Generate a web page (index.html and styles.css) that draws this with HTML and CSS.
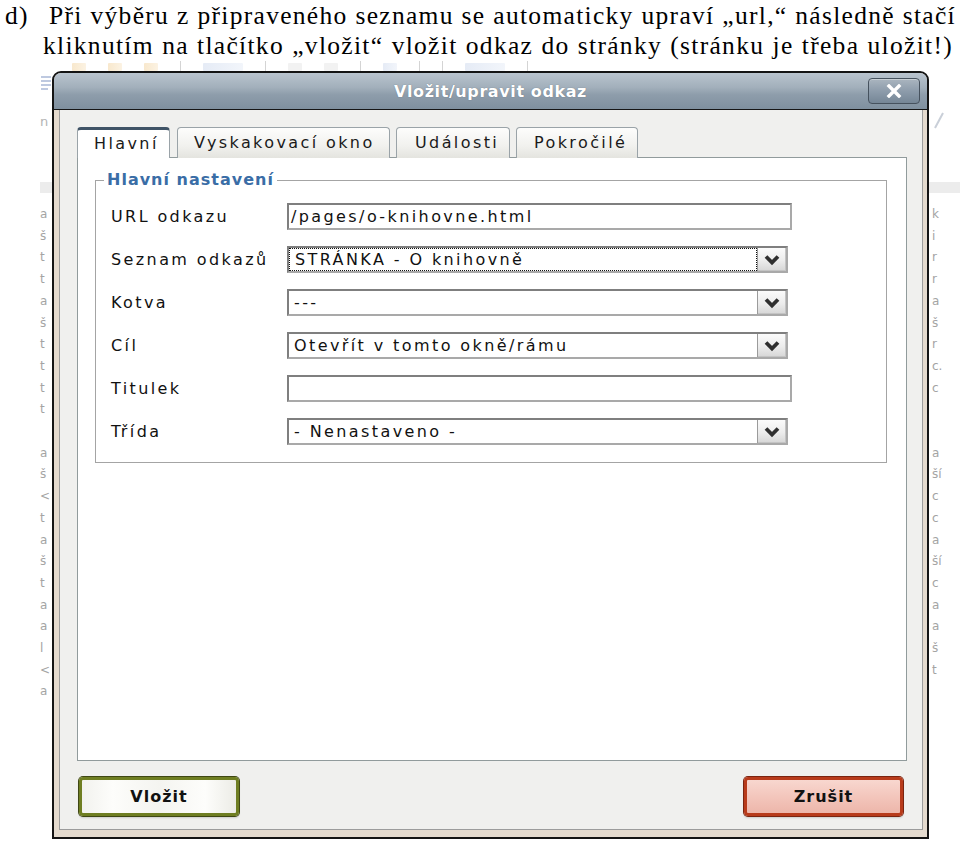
FILE: index.html
```html
<!DOCTYPE html>
<html lang="cs">
<head>
<meta charset="utf-8">
<title>Vložit/upravit odkaz</title>
<link rel="stylesheet" href="styles.css">
</head>
<body>
<div class="doc">
  <p class="intro">
    <span class="line l1"><span class="mark">d)</span>Při výběru z připraveného seznamu se automaticky upraví „url,“ následně stačí</span>
    <span class="line l2">kliknutím na tlačítko „vložit“ vložit odkaz do stránky (stránku je třeba uložit!)</span>
  </p>

  <div class="editor">
    <div class="toolbar">
      <span class="tb-ico tb-orange"></span>
      <span class="tb-ico tb-orange"></span>
      <span class="tb-ico tb-orange"></span>
      <span class="tb-sep"></span>
      <span class="tb-ico tb-blue wide"></span>
      <span class="tb-sep"></span>
      <span class="tb-ico tb-grey"></span>
      <span class="tb-ico tb-grey"></span>
      <span class="tb-sep"></span>
      <span class="tb-ico tb-blue"></span>
      <span class="tb-sep"></span>
      <span class="tb-sep"></span>
      <span class="tb-ico tb-blue wide"></span>
      <span class="tb-sep"></span>
    </div>
    <div class="page">
      <div class="col col-left">
        <svg class="list-ico" width="12" height="15" viewBox="0 0 12 15"><path d="M1 2h10M1 6h10M1 10h10M1 14h7" stroke="#a9b8d6" stroke-width="1.5"/></svg>
        <div class="ghost-n">n</div>
        <div class="band"></div>
        <div class="letters">
          <div>a</div><div>š</div><div>t</div><div>t</div><div>a</div><div>š</div><div>t</div><div>t</div><div>t</div><div>t</div><div>&nbsp;</div>
          <div>a</div><div>š</div><div>&lt;</div><div>t</div><div>a</div><div>š</div><div>t</div><div>a</div><div>a</div><div>l</div><div>&lt;</div><div>a</div>
        </div>
      </div>
      <div class="col col-right">
        <svg class="pen-ico" width="12" height="20" viewBox="0 0 12 20"><path d="M2 18L10 3" stroke="#c9cfd8" stroke-width="2"/></svg>
        <div class="band"></div>
        <div class="letters">
          <div>k</div><div>i</div><div>r</div><div>r</div><div>a</div><div>š</div><div>r</div><div>c.</div><div>c</div><div>&nbsp;</div><div>&nbsp;</div>
          <div>a</div><div>ší</div><div>c</div><div>c</div><div>a</div><div>ší</div><div>c</div><div>a</div><div>a</div><div>š</div><div>t</div>
        </div>
      </div>
    </div>
  </div>

  <div class="dialog">
    <div class="titlebar">
      <span></span>
      <span class="title">Vložit/upravit odkaz</span>
      <span class="close">
        <svg width="16" height="14" viewBox="0 0 16 14"><path d="M3 2L13 12M13 2L3 12" stroke="#fff" stroke-width="3.4" stroke-linecap="square"/></svg>
      </span>
    </div>
    <div class="frame">
      <div class="tabs">
        <div class="tab active t1">Hlavní</div>
        <div class="tab t2">Vyskakovací okno</div>
        <div class="tab t3">Události</div>
        <div class="tab t4">Pokročilé</div>
      </div>
      <div class="panel">
        <fieldset class="group">
          <legend>Hlavní nastavení</legend>
          <div class="row">
            <span class="label">URL odkazu</span>
            <div class="input">/pages/o-knihovne.html</div>
          </div>
          <div class="row">
            <span class="label">Seznam odkazů</span>
            <div class="select focused"><span class="val"><span class="focus">STRÁNKA - O knihovně</span></span><span class="arrow"><svg width="18" height="12" viewBox="0 0 18 12"><path d="M3 2.5L9 8.5L15 2.5" stroke="#2f2f2f" stroke-width="3.8" fill="none"/></svg></span></div>
          </div>
          <div class="row">
            <span class="label">Kotva</span>
            <div class="select"><span class="val">---</span><span class="arrow"><svg width="18" height="12" viewBox="0 0 18 12"><path d="M3 2.5L9 8.5L15 2.5" stroke="#2f2f2f" stroke-width="3.8" fill="none"/></svg></span></div>
          </div>
          <div class="row">
            <span class="label">Cíl</span>
            <div class="select"><span class="val">Otevřít v tomto okně/rámu</span><span class="arrow"><svg width="18" height="12" viewBox="0 0 18 12"><path d="M3 2.5L9 8.5L15 2.5" stroke="#2f2f2f" stroke-width="3.8" fill="none"/></svg></span></div>
          </div>
          <div class="row">
            <span class="label">Titulek</span>
            <div class="input"></div>
          </div>
          <div class="row">
            <span class="label">Třída</span>
            <div class="select"><span class="val">- Nenastaveno -</span><span class="arrow"><svg width="18" height="12" viewBox="0 0 18 12"><path d="M3 2.5L9 8.5L15 2.5" stroke="#2f2f2f" stroke-width="3.8" fill="none"/></svg></span></div>
          </div>
        </fieldset>
      </div>
      <div class="actions">
        <div class="btn btn-ok">Vložit</div>
        <div class="btn btn-cancel">Zrušit</div>
      </div>
    </div>
  </div>
</div>
</body>
</html>
```

FILE: styles.css
```css
* { box-sizing: border-box; }
html, body { margin: 0; padding: 0; background: #fff; }
body { width: 960px; height: 846px; overflow: hidden; font-family: "Liberation Serif", "Times New Roman", serif; }

.doc { position: relative; width: 960px; height: 846px; }

/* intro text */
.intro { margin: 0; padding-top: 1px; font-size: 25.5px; line-height: 30px; letter-spacing: 1.3px; color: #000; }
.line { display: block; text-align: justify; text-align-last: justify; white-space: nowrap; }
.l1 { margin-left: 5px; width: 951px; }
.l2 { margin-left: 43px; width: 910px; }
.mark { display: inline-block; width: 44px; text-align: left; text-align-last: left; }

/* faded editor behind the dialog */
.editor { font-family: "DejaVu Sans", sans-serif; }
.toolbar { height: 11px; display: flex; align-items: flex-start; gap: 22px; padding-left: 72px; overflow: hidden; }
.tb-ico { width: 14px; height: 8px; margin-top: 2px; opacity: .45; border-radius: 1px; }
.tb-ico.wide { width: 40px; }
.tb-orange { background: linear-gradient(90deg, #f0cc90, #f7e3c0); }
.tb-blue { background: linear-gradient(90deg, #c6d3ea, #e2e9f5); }
.tb-grey { background: #e2e2e2; }
.tb-sep { width: 1px; height: 11px; background: #d4d4d4; }

.page { display: flex; justify-content: space-between; padding-left: 40px; }
.col { display: flex; flex-direction: column; color: #a4a4a4; font-size: 12px; }
.col-left { width: 12px; }
.col-right { width: 31px; }
.list-ico { display: block; margin-top: 3px; }
.ghost-n { margin-top: 26px; height: 12px; line-height: 12px; color: #b4b4b4; font-size: 13px; }
.pen-ico { display: block; margin-top: 38px; margin-left: 4px; }
.band { height: 11px; background: #ececec; }
.col-left .band { margin-top: 54px; }
.col-right .band { margin-top: 52px; }
.letters { margin-top: 11px; line-height: 21.7px; }
.col-right .letters { padding-left: 3px; }

/* dialog */
.dialog {
  position: absolute; left: 52px; top: 71px; width: 877px; height: 768px;
  border: 2px solid #141414; border-radius: 9px 9px 0 0;
  background: #e4dace;
  display: flex; flex-direction: column;
  font-family: "DejaVu Sans", Verdana, sans-serif; color: #111;
  overflow: hidden;
}
.titlebar {
  flex: none; height: 37px; border-bottom: 1px solid #161616;
  background: linear-gradient(#b9c4ce, #a2afbb 40%, #8e9dab 60%, #7f909f);
  display: grid; grid-template-columns: 1fr auto 1fr; align-items: center;
}
.title { color: #fff; font-weight: bold; font-size: 16px; letter-spacing: .6px; text-shadow: 0 0 1px rgba(60,70,80,.6); }
.close {
  justify-self: end; margin-right: 7px; width: 52px; height: 26px;
  border: 1px solid #46525e; border-radius: 4px;
  background: linear-gradient(#aab5bf, #8d9cab 50%, #758696);
  box-shadow: inset 0 1px 0 rgba(255,255,255,.35);
  display: flex; align-items: center; justify-content: center;
}

.frame {
  flex: 1; margin: 0 4px 7px 5px;
  border: 1px solid #9c9c9c; border-top: 0;
  background: #f0f0ee;
  padding: 17px 15px 0 17px;
  display: flex; flex-direction: column;
}

.tabs { flex: none; display: flex; height: 31px; margin-bottom: -1px; position: relative; z-index: 1; }
.tab {
  height: 31px; padding-left: 16px; line-height: 30px;
  font-size: 16px; letter-spacing: 2.4px; color: #1a1a1a;
  border: 1px solid #9aa3a8; border-bottom: 0; border-radius: 4px 4px 0 0;
  background: linear-gradient(#fdfdfc, #f1f1ee 60%, #e4e4df);
}
.tab.active { background: #fff; border-top: 3px solid #3f5366; line-height: 28px; }
.t1 { width: 93px; }
.t2 { width: 213px; margin-left: 7px; }
.t3 { width: 114px; margin-left: 6px; padding-left: 18px; }
.t4 { width: 122px; margin-left: 6px; padding-left: 17px; }

.panel {
  flex: 1; background: #fff; border: 1px solid #919b9c;
  padding: 13px 19px 0 17px;
}

.group { margin: 0; border: 1px solid #a4a4a4; padding: 6px 0 9px 15px; min-width: 0; }
.group legend {
  margin-left: -7px; padding: 0 3px; line-height: 18px;
  font-weight: bold; font-size: 16px; letter-spacing: 1px; color: #3a6da6;
}
.row { display: flex; align-items: center; height: 43px; font-size: 16px; letter-spacing: 2.4px; }
.label { width: 176px; flex: none; }

.input {
  width: 505px; height: 27px; padding-left: 2px; line-height: 23px;
  border: 2px solid; border-color: #7f7f7f #a9a9a9 #a9a9a9 #7f7f7f;
  background: #fff; white-space: nowrap; overflow: hidden;
}
.select {
  width: 501px; height: 27px; display: flex;
  border: 2px solid; border-color: #7f7f7f #a9a9a9 #a9a9a9 #7f7f7f;
  background: #fff;
}
.select .val { flex: 1; padding: 1px 2px 1px 5px; line-height: 21px; white-space: nowrap; overflow: hidden; }
.select.focused .val { padding: 0; }
.focus { display: block; height: 23px; line-height: 21px; padding-left: 5px; border: 1px dotted #111; }
.arrow {
  flex: none; width: 29px; height: 23px;
  border-left: 1px solid #9b9b9b;
  background: linear-gradient(#fbfbfb, #ececec 55%, #d6d6d6);
  display: flex; align-items: center; justify-content: center;
  box-shadow: inset -1px -1px 0 #c4c4c4;
}

.actions { flex: none; display: flex; justify-content: space-between; padding: 16px 4px 13px 2px; }
.btn {
  width: 160px; height: 39px; border-radius: 4px;
  display: flex; align-items: center; justify-content: center;
  font-weight: bold; font-size: 16px; letter-spacing: 1px; color: #111;
}
.btn-ok {
  border: 3px solid #6f7e22;
  box-shadow: 0 0 0 1px #3f4714, 0 2px 2px rgba(0,0,0,.15);
  background: linear-gradient(90deg, #f2f2ee, #fdfdfb 20%, #f4f4f0 50%, #fdfdfb 80%, #ecece6);
}
.btn-cancel {
  width: 159px;
  border: 3px solid #b83b1b;
  box-shadow: 0 0 0 1px #7a2410, 0 2px 2px rgba(0,0,0,.15);
  background: linear-gradient(#f8d7cf, #f3c6bc 50%, #edb6aa);
}
```
